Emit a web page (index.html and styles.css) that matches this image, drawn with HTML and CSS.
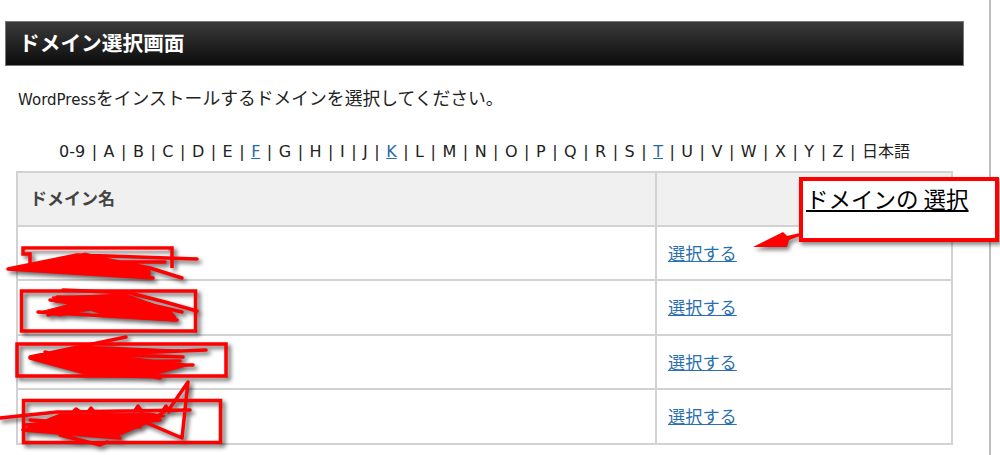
FILE: index.html
```html
<!DOCTYPE html>
<html lang="ja">
<head>
<meta charset="utf-8">
<title>ドメイン選択画面</title>
<link rel="stylesheet" href="styles.css">
</head>
<body>
<div class="page">
  <h1 class="title">ドメイン選択画面</h1>
  <p class="lead"><span class="latin">WordPress</span>をインストールするドメインを選択してください。</p>
  <div class="main">
    <nav class="alpha">0-9 | A | B | C | D | E | <a href="#">F</a> | G | H | I | J | <a href="#">K</a> | L | M | N | O | P | Q | R | S | <a href="#">T</a> | U | V | W | X | Y | Z | <span class="jp">日本語</span></nav>
    <table class="domains">
      <tr class="head"><th class="c1">ドメイン名</th><th class="c2"></th></tr>
      <tr><td></td><td><a href="#">選択する</a></td></tr>
      <tr class="r2"><td></td><td><a href="#">選択する</a></td></tr>
      <tr><td></td><td><a href="#">選択する</a></td></tr>
      <tr class="r2"><td></td><td><a href="#">選択する</a></td></tr>
    </table>
  </div>
  <svg class="marks" width="1000" height="455" viewBox="0 0 1000 455" aria-hidden="true">
    <g class="ink">
      <path class="box" d="M30 268 L30 254 L23 254 L23 248 L172 248 L172 268"/>
      <path class="fillred" d="M10 269 L77 256 L85 253 L120 262 L150 270 L150 277 L60 273 Z"/>
      <path d="M8 269 L77 255 L197 259 M8 269 L153 278 M83 255 L150 268 L182 278 M33 267 L133 275 M60 262 L165 262"/>
      <rect class="box" x="21.500" y="291" width="174" height="40"/>
      <path class="fillred" d="M40 312 L70 304 L55 302 L52 297 L125 294 L170 310 L176 317 L175 321 L110 317 L90 310 L60 316 Z"/>
      <path d="M63 290 L130 293 L165 302 L197 311 M50 300 L167 312 M38 312 L177 320 M48 315 L117 297 L182 312 M57 297 L133 298 M90 306 L150 316 M70 308 L150 304"/>
      <rect class="box" x="17" y="344" width="209" height="32"/>
      <path class="fillred" d="M31 357 L80 346 L180 350 L120 356 L190 365 L150 376 L93 374 Z"/>
      <path d="M126 337 L30 357 L206 350 M30 358 L160 378 M30 358 L93 375 L160 377 M93 365 L193 365 M100 367 L143 373 M60 353 L183 357 M45 352 L110 370 M60 362 L180 361"/>
      <rect class="box" x="23.500" y="400.500" width="197" height="42"/>
      <path class="fillred" d="M25 428 L60 414 L150 413 L165 416 L146 424 L118 436 L62 432 Z"/>
      <path d="M0 418 L57 412 L190 410 M188 382 L182 438 L147 423 L170 408 L188 382 M23 430 L120 438 M25 425 L150 415 M60 435 L100 445 L107 442 M30 420 L140 427 M60 428 L160 420 M73 412 L76 409 L80 412 M88 412 L91 408 L94 412 M134 412 L138 406 L142 412 M162 412 L166 406 L169 412"/>
    </g>
    <path class="pale" d="M26 250.500 L168 250.500"/>
    <path class="arrow" d="M753 247 L783 232 L787 236 L800 233 L800 236 L789 240 L787 247 Z"/>
  </svg>
  <div class="callout"><span class="callout-text">ドメインの 選択</span></div>
</div>
</body>
</html>
```

FILE: styles.css
```css
* { box-sizing: border-box; }
html, body { margin: 0; height: 100%; overflow: hidden; background: #fff; }
body { font-family: "DejaVu Sans", "Noto Sans CJK JP", sans-serif; color: #222; }

.page {
  position: relative;
  width: 991px;
  height: 455px;
  padding: 21px 0 0 5px;
  border-right: 2px solid #bdbdbd;
}

.title {
  width: 959px;
  height: 45px;
  margin: 0;
  padding: 0 0 2px 13px;
  display: flex;
  align-items: center;
  border: 1px solid #777;
  background: linear-gradient(#3a3a3a, #0c0c0c);
  color: #fff;
  font: bold 20.7px/1 "Noto Sans CJK JP", sans-serif;
}

.lead {
  margin: 19px 0 0 13px;
  height: 24px;
  font: 17.8px/24px "Noto Sans CJK JP", sans-serif;
  color: #222;
}
.latin { font: 15px/24px "DejaVu Sans", sans-serif; }

.main { width: 937px; margin: 0 0 0 11px; }

.alpha {
  margin-top: 29px;
  height: 33px;
  text-align: center;
  white-space: nowrap;
  font-size: 16px;
  word-spacing: 1.42px;
  line-height: 24px;
  color: #222;
}
.alpha a { color: #2a6aa8; }
.jp { font: 16px/24px "Noto Sans CJK JP", sans-serif; }

.domains {
  width: 937px;
  table-layout: fixed;
  border-collapse: collapse;
  border: 2px solid #d2d2d2;
}
.domains th, .domains td {
  height: 54px;
  padding: 0 0 1px 11px;
  border: 2px solid #d2d2d2;
  text-align: left;
  font: 17.2px/24px "Noto Sans CJK JP", sans-serif;
}
.domains .r2 td { height: 55px; }
.domains .head th { background: #f0f0f0; color: #444; font-weight: bold; padding: 0 0 2px 12px; font-size: 17px; }
.domains .c1 { width: 639px; }
.domains a { color: #2a6fb0; }

.marks { position: absolute; left: 0; top: 0; }
.ink { filter: drop-shadow(3px 3px 2px rgba(0, 0, 0, .6)); }
.ink path, .ink rect { fill: none; stroke: #f00; stroke-width: 3.500; stroke-linecap: round; stroke-linejoin: round; }
.ink .box { stroke-width: 3.500; stroke-linecap: butt; stroke-linejoin: miter; }
.ink .fillred { fill: #f00; stroke-width: 1; }
.pale { fill: none; stroke: #f3c8c8; stroke-width: 1.500; }
.arrow { fill: #f00; filter: drop-shadow(2px 3px 2px rgba(0, 0, 0, .5)); }

.callout {
  position: absolute;
  left: 799px;
  top: 177px;
  width: 200px;
  height: 65px;
  padding: 3px 0 0 3px;
  background: #fff;
  border: 4px solid #f00;
  box-shadow: 2px 3px 4px rgba(0, 0, 0, .45);
}
.callout-text {
  font: 22.5px/28px "Noto Sans CJK JP", sans-serif;
  color: #000;
  text-decoration: underline;
  white-space: nowrap;
}
```
